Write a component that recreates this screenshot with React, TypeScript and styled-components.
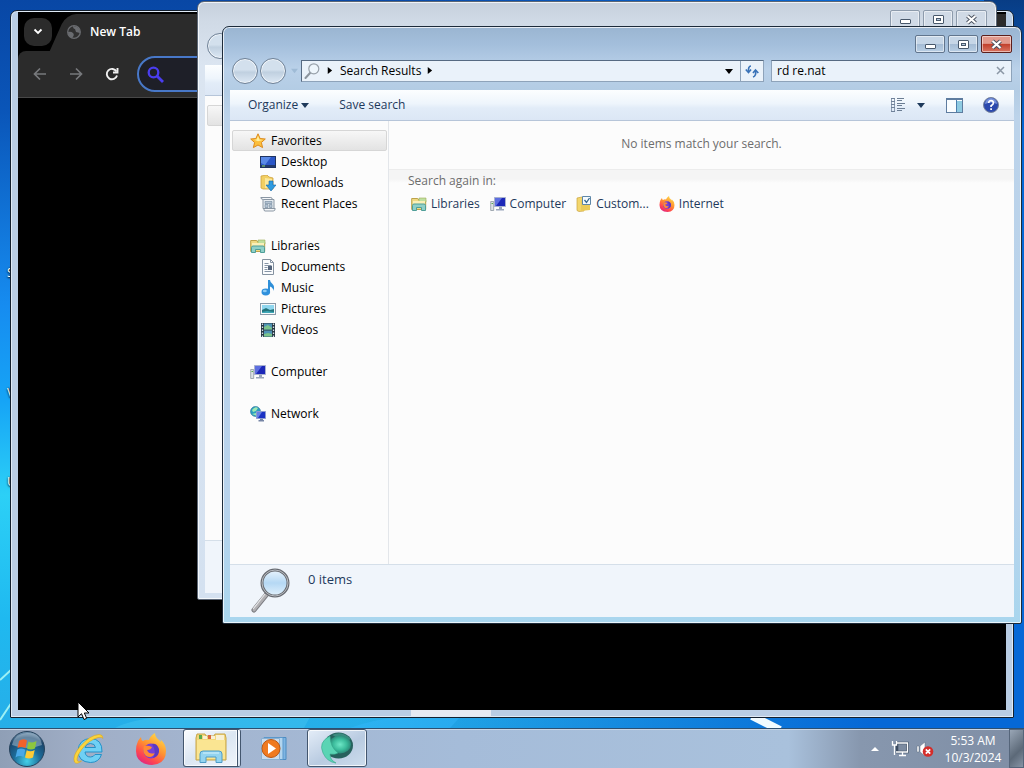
import React from "react";
import styled, { createGlobalStyle, css } from "styled-components";

const GlobalStyle = createGlobalStyle`
  *, *::before, *::after { box-sizing: border-box; }
  body { margin: 0; font: 12px/16px "Open Sans", "Noto Sans", sans-serif; color: #000; }
  button, input { font: inherit; color: inherit; border: 0; padding: 0; margin: 0; background: none; }
  a { color: inherit; text-decoration: none; }
  ul { list-style: none; margin: 0; padding: 0; }
  svg { display: block; flex: none; }
`;

/* ---------- Desktop ---------- */

const Screen = styled.div`
  display: flex;
  flex-direction: column;
  height: 100vh;
  overflow: hidden;
`;

const Desktop = styled.main`
  position: relative;
  flex: 1;
  min-height: 0;
  overflow: hidden;
  background:
    linear-gradient(180deg, rgba(8, 56, 124, 0.9) 0, transparent 18%) right / 40px 100% no-repeat,
    linear-gradient(90deg, transparent 35%, #0668d6 85%),
    linear-gradient(180deg, #0847a5 0%, #0a55b8 15%, #168cf0 42%, #16a4f6 55%, #2cd0f6 68%, #1fb9f0 85%, #26aee8 100%);
`;

const Streaks = styled.svg`
  position: absolute;
  inset: 0;
  width: 100%;
  height: 100%;
`;

const DesktopLabel = styled.span<{ $top: number }>`
  position: absolute;
  left: 7px;
  top: ${(p) => p.$top}px;
  color: #fff;
  text-shadow: 0 1px 2px #000, 1px 0 2px #000;
`;

/* ---------- Glass window ---------- */

const WindowFrame = styled.section<{ $active?: boolean; $x: number; $y: number; $r: number; $b: number }>`
  position: absolute;
  left: ${(p) => p.$x}px;
  top: ${(p) => p.$y}px;
  right: ${(p) => p.$r}px;
  bottom: ${(p) => p.$b}px;
  display: flex;
  flex-direction: column;
  padding: 0 7px 6px;
  border: 1px solid ${(p) => (p.$active ? "#1d2b3a" : "#5b6675")};
  border-radius: 7px 7px 2px 2px;
  box-shadow: inset 0 0 0 1px rgba(255, 255, 255, 0.75);
  background: ${(p) =>
    p.$active
      ? "linear-gradient(180deg, #9ab5d1 0, #a4bfdc 18px, #bad1e9 42px, #b3cce4 64px, #bcd3ea 90px, #b8d3ec 80%, #a9d6ee 100%)"
      : "linear-gradient(180deg, #c6d0dd 0, #d0dae6 20px, #dbe5f1 64px, #d4e1f0 100%)"};
`;

const TitleBar = styled.header`
  display: flex;
  justify-content: flex-end;
  gap: 3px;
  height: 32px;
  padding: 8px 2px 0 0;
`;

const CaptionButton = styled.button<{ $close?: boolean; $active?: boolean }>`
  display: grid;
  place-items: center;
  width: ${(p) => (p.$close ? 31 : 30)}px;
  height: 18px;
  border: 1px solid #61758d;
  border-radius: 2px;
  box-shadow: inset 0 0 0 1px rgba(255, 255, 255, 0.5);
  background: linear-gradient(180deg, #c6d6e7 0 48%, #a5bcd5 52%, #b9cfe5 100%);
  ${(p) => !p.$active && css`
    border-color: #8d9bac;
    background: #d0dae6;
  `}
  ${(p) => p.$close && p.$active && css`
    border-color: #5c1f1c;
    background: linear-gradient(180deg, #e29a8d 0 46%, #c2402c 52%, #d97562 100%);
  `}
`;

const NavRow = styled.div`
  display: flex;
  align-items: center;
  height: 31px;
  padding: 0 2px 8px 2px;
`;

const HistoryButtons = styled.div`
  display: flex;
  align-items: center;
  gap: 2px;
  height: 24px;
`;

const RoundButton = styled.button`
  width: 26px;
  height: 26px;
  border: 1px solid #6f8196;
  border-radius: 50%;
  box-shadow: inset 0 0 0 1px rgba(255, 255, 255, 0.7);
  background: linear-gradient(180deg, #d3e0ed 0 45%, #c0d0e0 55%, #dce8f4 100%);
`;

const RecentButton = styled.button`
  display: grid;
  place-items: center;
  width: 12px;
  height: 20px;
  margin-right: 1px;
`;

const AddressBar = styled.nav`
  display: flex;
  flex: 1;
  align-items: center;
  height: 22px;
  border: 1px solid #8ea3ba;
  border-top-color: #566a82;
  border-left-color: #566a82;
  background: #eaf2fa;
`;

const LocationIcon = styled.span`
  width: 24px;
  padding-left: 2px;
`;

const Crumb = styled.button`
  padding: 0 5px 0 7px;
`;

const AddressTail = styled.div`
  display: flex;
  align-items: center;
  height: 100%;
  margin-left: auto;
`;

const AddressButton = styled.button<{ $divided?: boolean }>`
  display: grid;
  place-items: center;
  width: 23px;
  height: 100%;
  ${(p) => p.$divided && css`border-left: 1px solid #8ea3ba;`}
`;

const SearchBox = styled.form`
  display: flex;
  align-items: center;
  flex: 0 0 241px;
  height: 22px;
  margin-left: 7px;
  padding: 0 6px 0 5px;
  border: 1px solid #8ea3ba;
  border-top-color: #566a82;
  background: #eaf2fa;
`;

const SearchInput = styled.input`
  flex: 1;
  min-width: 0;
  outline: 0;
`;

const Client = styled.div`
  display: flex;
  flex: 1;
  min-height: 0;
  flex-direction: column;
  background: #fcfcfc;
`;

const Toolbar = styled.div`
  display: flex;
  align-items: center;
  height: 31px;
  padding: 0 15px 0 18px;
  border-bottom: 1px solid #b6c5d9;
  background: linear-gradient(180deg, #fcfeff 0, #eef5fc 45%, #e2ecf8 60%, #dce7f5 100%);
  color: #1e395b;
`;

const ToolbarButton = styled.button`
  display: flex;
  align-items: center;
  gap: 3px;
  margin-right: 30px;
`;

const ToolbarIcons = styled.div`
  display: flex;
  align-items: center;
  margin-left: auto;
`;

const IconButton = styled.button<{ $gap?: number }>`
  margin-left: ${(p) => p.$gap ?? 0}px;
`;

const Body = styled.div`
  display: flex;
  flex: 1;
  min-height: 0;
`;

const SidePane = styled.nav`
  flex: 0 0 159px;
  padding: 9px 1px 0 2px;
  border-right: 1px solid #e3e6ea;
`;

const SideGroup = styled.ul`
  margin-bottom: 21px;
`;

const SideItem = styled.a<{ $child?: boolean; $selected?: boolean }>`
  display: flex;
  align-items: center;
  gap: 5px;
  height: 21px;
  padding-left: ${(p) => (p.$child ? 27 : 17)}px;
  border: 1px solid transparent;
  white-space: nowrap;
  ${(p) => p.$selected && css`
    border-color: #d6d6d6;
    border-radius: 2px;
    background: linear-gradient(180deg, #f7f7f7, #e3e3e3);
  `}
`;

const Results = styled.section`
  flex: 1;
  min-width: 0;
`;

const EmptyMessage = styled.p`
  margin: 0;
  height: 48px;
  padding-top: 15px;
  text-align: center;
  color: #6d6d6d;
`;

const SearchAgain = styled.div`
  padding: 3px 19px 0;
  border-top: 1px solid #ececec;
  background: linear-gradient(180deg, #f5f5f5 0 9px, #fcfcfc 13px);
  color: #6d6d6d;
`;

const PlaceList = styled.ul`
  display: flex;
  gap: 10px;
  padding: 7px 0 0 3px;
  color: #1e395b;
`;

const PlaceLink = styled.a`
  display: flex;
  align-items: center;
  gap: 4px;
`;

const Details = styled.footer`
  display: flex;
  height: 53px;
  padding: 3px 0 0 20px;
  gap: 16px;
  border-top: 1px solid #d5dfe9;
  background: #f0f5fb;
  font-size: 13px;
  color: #1e395b;
`;

const ItemCount = styled.span`
  padding-top: 3px;
`;

/* ---------- Browser ---------- */

const BrowserFrame = styled.section`
  position: absolute;
  left: 10px;
  top: 10px;
  right: 10px;
  bottom: 10px;
  display: flex;
  border: 1px solid #14202e;
  border-radius: 7px 7px 1px 1px;
  padding: 1px 7px 7px;
  background: linear-gradient(90deg, transparent 400px, #e6eaf2 400px 480px, transparent 480px) bottom / 100% 7px no-repeat, #b9cde4;
  box-shadow: inset 0 0 0 1px #dfeaf6;
`;

const BrowserView = styled.div`
  display: flex;
  flex: 1;
  flex-direction: column;
  overflow: hidden;
  background: #000;
  color: #fff;
`;

const TabStrip = styled.div`
  display: flex;
  align-items: center;
  height: 39px;
  padding-left: 6px;
`;

const TabSearch = styled.button`
  display: grid;
  place-items: center;
  width: 28px;
  height: 28px;
  border-radius: 10px;
  background: #2b2b2b;
`;

const Tab = styled.div`
  position: relative;
  display: flex;
  flex: 1;
  align-items: center;
  align-self: stretch;
  gap: 9px;
  margin-left: 6px;
  padding-left: 9px;
  font-size: 12px;
  font-weight: 600;
  &::before {
    content: "";
    position: absolute;
    inset: 2px 0 0 0;
    border-radius: 10px 0 0 0;
    background: #2b2b2b;
    transform: skewX(-24deg);
  }
  > * { position: relative; }
`;

const BrowserBar = styled.div`
  display: flex;
  align-items: center;
  gap: 20px;
  height: 47px;
  padding-left: 14px;
  border-bottom: 1px solid #484848;
  border-radius: 8px 0 0 0;
  background: #2b2b2b;
`;

const Omnibox = styled.label`
  display: flex;
  flex: 1;
  align-items: center;
  height: 36px;
  margin: 0 200px 0 -3px;
  padding-left: 8px;
  border: 2px solid #4878c8;
  border-radius: 18px;
  background: #1e1f28;
`;

/* ---------- Taskbar ---------- */

const Taskbar = styled.footer`
  display: flex;
  align-items: stretch;
  flex: none;
  height: 40px;
  border-top: 1px solid #2d4f70;
  box-shadow: inset 0 1px 0 #c9d6e6;
  background: linear-gradient(90deg, #8f9fb6 0, #a0aec6 8%, #a3b5d0 20%, #a5bcd9 45%, #a9c1dc 77%, #8797ae 84%, #7f8ea5 100%);
`;

const TaskButton = styled.button<{ $w: number; $open?: boolean; $stacked?: boolean }>`
  display: grid;
  place-items: center;
  width: ${(p) => p.$w}px;
  ${(p) => p.$open && css`
    margin-bottom: 1px;
    border: 1px solid #43566e;
    border-radius: 3px;
    box-shadow: inset 0 0 0 1px rgba(255, 255, 255, 0.75);
    background: linear-gradient(150deg, #e4edf8 0, #b9cbe1 55%, #cddded 100%);
  `}
  ${(p) => p.$stacked && css`
    border-right: 4px double #43566e;
    background: linear-gradient(150deg, #fafcff 0, #dbe6f2 50%, #f0f5fb 100%);
  `}
`;

const Pinned = styled.div`
  display: flex;
  margin-right: 5px;
`;

const Tray = styled.div`
  display: flex;
  align-items: center;
  margin-left: auto;
`;

const TrayButton = styled.button<{ $w: number }>`
  display: grid;
  place-items: center;
  width: ${(p) => p.$w}px;
  height: 100%;
`;

const Clock = styled.button`
  width: 72px;
  text-align: center;
  color: #fff;
  line-height: 17px;
`;

const ShowDesktop = styled.button`
  width: 15px;
  height: 100%;
  border: 1px solid #55657a;
  background: linear-gradient(135deg, #99a6b6, #5c6978 60%, #8794a5);
`;

const Pointer = styled.svg`
  position: absolute;
  left: 77px;
  top: 701px;
`;

/* ---------- Icons ---------- */

const Triangle = ({ dir = "down", w = 7, color = "#1b2a3a" }: { dir?: "down" | "right" | "up"; w?: number; color?: string }) => {
  const d = { down: "M0 2h8L4 7z", right: "M2 0v8l5-4z", up: "M0 6h8L4 2z" }[dir];
  return <svg width={w} height={w} viewBox="0 0 8 8"><path d={d} fill={color} /></svg>;
};

const StarIcon = () => (
  <svg width="16" height="16" viewBox="0 0 16 16">
    <path d="M8 .8l2.1 4.7 5.2.5-3.9 3.5 1.2 5.1L8 12l-4.6 2.6 1.2-5.1L.7 6l5.2-.5z" fill="#fcbf3c" stroke="#dd8a1c" />
    <path d="M8 2.8l1.4 3.6 3.6.5-5 1.4-3.8-1.6 2.4-.3z" fill="#fff0a0" />
  </svg>
);
const DesktopIcon = () => (
  <svg width="16" height="16" viewBox="0 0 16 16">
    <rect x=".5" y="2.5" width="15" height="11" fill="#2b57c8" stroke="#1f3461" />
    <path d="M1 3h10L5 11l-4-2z" fill="#5a8ae8" /><path d="M1 11h14v2H1z" fill="#243a6b" /><path d="M2 11.500h3v1H2z" fill="#8fe07a" />
  </svg>
);
const DownloadsIcon = () => (
  <svg width="16" height="16" viewBox="0 0 16 16">
    <path d="M1 1l6-1 2 2 4 1v11H3l-2-1z" fill="#f2cf62" stroke="#cfa23c" strokeWidth=".8" />
    <path d="M5 3l7 1v10l-7-1z" fill="#fbe89b" />
    <path d="M9 6h4v4h3l-5 6-5-6h3z" fill="#2e9be0" stroke="#1567a8" strokeWidth=".6" />
  </svg>
);
const RecentIcon = () => (
  <svg width="16" height="16" viewBox="0 0 16 16">
    <path d="M3 3.500h11v9H3z" fill="#e6ebf0" stroke="#8a96a3" />
    <path d="M.8 1.500h10q1.500 0 1.500 2H3.500q-2.700 0-2.700-2zM4 12.500h11.200q0 2.500-2 2.500H5q-1.500 0-1-2.500z" fill="#f5f7f9" stroke="#8a96a3" />
    <path d="M5 5.500h7v2H5zM5 8.500h3v3H5zM9.500 8.500H12v3H9.500z" fill="#b5c4d3" stroke="#71869c" strokeWidth=".6" />
  </svg>
);
const LibrariesIcon = () => (
  <svg width="16" height="16" viewBox="0 0 16 16">
    <path d="M.7 2.500h6l1 1.500h7v9.500h-14z" fill="#f0da84" stroke="#bda24a" />
    <path d="M8 2h7v4H8z" fill="#bfe0a0" stroke="#9dac55" strokeWidth=".6" />
    <path d="M2 5h12v3H2z" fill="#fbf0b8" />
    <path d="M1.500 14.500V9.500q0-1.500 1.500-1.500h10q1.500 0 1.500 1.500v5h-4v-3h-5v3z" fill="#8fd0c8" stroke="#4f9e98" />
  </svg>
);
const DocumentsIcon = () => (
  <svg width="16" height="16" viewBox="0 0 16 16">
    <path d="M2.500.5h8l3 3v12h-11z" fill="#fbfcfd" stroke="#8592a0" />
    <path d="M10.500.5v3h3M4.500 4.500h4M4.500 6.500h7M4.500 8.500h3M4.500 10.500h3M4.500 12.500h7" fill="none" stroke="#8795a6" />
    <rect x="8" y="7" width="4" height="4" fill="#53637a" />
  </svg>
);
const MusicIcon = () => (
  <svg width="16" height="16" viewBox="0 0 16 16">
    <path d="M8 0h2q0 2 2.500 4t1 7q0-3-3.500-4.500V12H8z" fill="#2f8fd8" />
    <ellipse cx="5.800" cy="12" rx="4.300" ry="3.400" fill="#2f90dc" /><ellipse cx="4.800" cy="11" rx="2" ry="1.300" fill="#8ccbf5" />
  </svg>
);
const PicturesIcon = () => (
  <svg width="16" height="16" viewBox="0 0 16 16">
    <rect x=".5" y="2.500" width="15" height="11" fill="#f7fafb" stroke="#8a9aa8" />
    <path d="M2 4h12v8H2z" fill="#8fd6ee" /><path d="M2 9l4-2 4 2 4-1v4H2z" fill="#24747c" /><path d="M2 11l5-1 7 1v1H2z" fill="#3fa8b8" />
  </svg>
);
const VideosIcon = () => (
  <svg width="16" height="16" viewBox="0 0 16 16">
    <path d="M1 1h14v14H1z" fill="#263642" /><path d="M4 1.500h8v6H4zM4 8.500h8v6H4z" fill="#4f93b5" /><path d="M4 5l4-2 4 3v1.500H4zM4 12l4-1 4 1v2.500H4z" fill="#7bc48c" />
    <path d="M2.500 1.500v14M13.500 1.500v14" stroke="#d7e2e8" strokeWidth="1.300" strokeDasharray="1.500 1.500" />
  </svg>
);
const ComputerIcon = () => (
  <svg width="16" height="16" viewBox="0 0 16 16">
    <path d="M.7 5.500h3v9h-3z" fill="#dde2e6" stroke="#8e98a2" strokeWidth=".8" /><path d="M1.500 7h1.500v1H1.500z" fill="#56ad50" />
    <path d="M4.500 1.500h11v9h-11z" fill="#1c28b8" stroke="#a9b2cf" /><path d="M5 2h7L6 10H5z" fill="#5d6ee0" />
    <path d="M9 11h3v2h2v1.500H6V13h3z" fill="#9aa6bb" />
  </svg>
);
const NetworkIcon = () => (
  <svg width="16" height="16" viewBox="0 0 16 16">
    <circle cx="5.500" cy="5.500" r="5" fill="#2b9fc0" stroke="#2b6e98" strokeWidth=".6" /><path d="M2 4q3-4 6-2L6 5 3 6zM2 8l4-1 1 3z" fill="#9ee8b4" />
    <path d="M6.500 5.500h9v7h-9z" fill="#1b32c4" stroke="#8d9bd0" /><path d="M7 6h5l-4 6H7z" fill="#6680e6" /><path d="M10 13h3v1h1v1.500H8.500V14H10z" fill="#7685a5" />
  </svg>
);
const CustomIcon = () => (
  <svg width="16" height="16" viewBox="0 0 16 16">
    <path d="M1 2l5-1 2 2v12l-5 .5-2-1z" fill="#f3d66d" stroke="#c9a33e" strokeWidth=".7" /><path d="M5 4l9 1v9l-9 1z" fill="#eccb58" />
    <path d="M6.500.5h8v8h-8z" fill="#f5fbff" stroke="#5f87a8" /><path d="M8.500 4l2 2.500 3-4.500" fill="none" stroke="#33658e" strokeWidth="1.300" />
  </svg>
);
const FirefoxIcon = ({ size }: { size: number }) => (
  <svg width={size} height={size} viewBox="0 0 32 32">
    <defs>
      <linearGradient id="ff" x1=".8" y1="0" x2=".2" y2="1"><stop offset="0" stopColor="#ffe14a" /><stop offset=".45" stopColor="#ff9030" /><stop offset=".75" stopColor="#ff4550" /><stop offset="1" stopColor="#d8208c" /></linearGradient>
    </defs>
    <path d="M3 8q2-3 3-4 0 3 2 4 3-2 6-1 1-4 6-7 0 4 4 7l2 2q0-2-1-3 6 5 6 12 0 13-14 14Q1 31 1 18q0-6 2-10z" fill="url(#ff)" />
    <circle cx="16" cy="18" r="7.500" fill="#7440d8" /><path d="M9 13q4-1 8 1-1 3-5 3 2 5 8 3-3 6-9 3-4-4-2-10z" fill="#ff8a35" />
    <path d="M17 11q5-1 7 5 1 7-6 9 4-6-1-14z" fill="#5b3ac2" />
  </svg>
);

const MagnifierIcon = () => (
  <svg width="16" height="16" viewBox="0 0 16 16">
    <path d="M6.500 9.500l-5 5.500" stroke="#8c959e" strokeWidth="2" strokeLinecap="round" /><circle cx="9.800" cy="5.800" r="5" fill="#eef6fc" stroke="#98a1aa" strokeWidth="1.200" />
  </svg>
);
const BigMagnifier = () => (
  <svg width="42" height="46" viewBox="0 0 42 46">
    <defs>
      <linearGradient id="lens" x1="0" y1="0" x2="0" y2="1"><stop offset="0" stopColor="#e9f4fd" /><stop offset=".5" stopColor="#b5d8f4" /><stop offset="1" stopColor="#e2f1fc" /></linearGradient>
    </defs>
    <path d="M17 26L4 42" stroke="#77787d" strokeWidth="5" strokeLinecap="round" /><path d="M17 26L4 42" stroke="#b0afb2" strokeWidth="3" strokeLinecap="round" /><path d="M15 26L3 41" stroke="#e8e8ea" strokeWidth="1.200" />
    <circle cx="25" cy="15" r="13" fill="url(#lens)" stroke="#66696f" strokeWidth="3" /><circle cx="25" cy="15" r="13" fill="none" stroke="#b9bdc3" strokeWidth="1" />
  </svg>
);
const RefreshIcon = () => (
  <svg width="14" height="14" viewBox="0 0 14 14" fill="none" stroke="#3a73b8" strokeWidth="1.700">
    <path d="M6 2Q3 2 3.500 8" /><path d="M.8 5.500L3.500 8.500 6 5.500" /><path d="M8 13Q11.500 12 10.500 6.500" /><path d="M8 9l2.500-3L13.300 9" />
  </svg>
);
const ViewIcon = () => (
  <svg width="16" height="16" viewBox="0 0 16 16" fill="none" stroke="#6b7d93">
    <path d="M1.500 1v14M4.500 1v14" stroke="#8c9db2" /><path d="M1 1.500h4M1 4.500h4M1 7.500h4M1 10.500h4M1 14.500h4" stroke="#70829a" />
    <path d="M7 1.500h7M7 3.500h5M7 6.500h8M7 8.500h5M7 11.500h8M7 13.500h5" />
  </svg>
);
const PreviewIcon = () => (
  <svg width="17" height="15" viewBox="0 0 17 15">
    <rect x=".5" y=".5" width="16" height="14" fill="#fafdff" stroke="#5e7c9f" /><path d="M1 1.500h15" stroke="#5e7c9f" /><path d="M10 3h6v11h-6z" fill="#8fcbe2" /><path d="M10.500 2v12" stroke="#4b7fae" />
  </svg>
);
const HelpIcon = () => (
  <svg width="16" height="16" viewBox="0 0 16 16">
    <circle cx="8" cy="8" r="7.500" fill="#2b49ad" stroke="#77839b" /><path d="M2 7a6 6 0 0 1 12 0q-6-3-12 0z" fill="#7892da" />
    <path d="M5.700 6q0-2.300 2.400-2.300T10.400 6Q10.400 7.300 8.100 8.800V10M8.100 11.300v1.600" fill="none" stroke="#fff" strokeWidth="1.700" />
  </svg>
);
const MinIcon = () => <svg width="13" height="11" viewBox="0 0 13 11"><rect x="1.500" y="5.500" width="10" height="4" rx=".5" fill="#fff" stroke="#48586b" /></svg>;
const MaxIcon = () => <svg width="13" height="11" viewBox="0 0 13 11"><rect x="1.500" y="1.500" width="10" height="8" rx=".5" fill="#fff" stroke="#48586b" /><rect x="4.500" y="4.500" width="4" height="2" fill="#b8cce0" stroke="#48586b" /></svg>;
const CloseIcon = () => <svg width="13" height="11" viewBox="0 0 13 11"><path d="M2.500 2l8 7M10.500 2l-8 7" stroke="#48505e" strokeWidth="4" /><path d="M2.500 2l8 7M10.500 2l-8 7" stroke="#fff" strokeWidth="2.200" /></svg>;

const StartOrb = () => (
  <svg width="38" height="38" viewBox="0 0 38 38">
    <defs>
      <radialGradient id="orb" cx=".5" cy=".85" r=".85"><stop offset="0" stopColor="#45d0e8" /><stop offset=".45" stopColor="#1c6b98" /><stop offset=".8" stopColor="#1a456b" /><stop offset="1" stopColor="#7f9eb8" /></radialGradient>
    </defs>
    <circle cx="19" cy="19" r="17.500" fill="url(#orb)" stroke="#26425c" /><path d="M4 15Q6 4 19 3t15 12Q19 21 4 15z" fill="#c0d3e0" opacity=".45" />
    <path d="M11 11q4-3 8-.5L17.500 18q-4-2-8 0z" fill="#f0622c" /><path d="M20.500 11.500q4 2 8-.5L27 18.500q-4 2-8 0z" fill="#8cc63e" />
    <path d="M9.300 19.500q4-2 8 .3L15.500 27q-4-2-8 .5z" fill="#48a8e8" /><path d="M18.700 20.300q4 2 8-.3L25 27.500q-4 2-8 0z" fill="#fccb36" />
  </svg>
);
const IeIcon = () => (
  <svg width="32" height="32" viewBox="0 0 32 32">
    <path d="M29 19H12q.5 5 5.500 5 3 0 4.500-2.500h6.500Q26 29.500 17.500 29.500 5 29 5 17.500 6 6 17.500 5.500 29.500 6 29 19zM12 14.500h10.500q-.5-4-5-4t-5.500 4z" fill="#6fd0f4" stroke="#2491c8" />
    <path d="M1.500 29Q-1 23 7 13.500 17 2 26 1.500q4 0 4 4-1-2-5-1Q16 7 9 16 2.500 25 4.500 28q1 1 4 0-5 4-7 1z" fill="#fbd43c" stroke="#d9a520" strokeWidth=".6" />
  </svg>
);
const ExplorerIcon = () => (
  <svg width="34" height="32" viewBox="0 0 34 32">
    <path d="M2 6l1-4h8l1 2h8l1-2h10l1 4v22H2z" fill="#f2d77b" stroke="#c6a448" /><path d="M5 3h3v4H5z" fill="#59a94e" /><path d="M9 4h4v3H9zM17 4h4v3h-4z" fill="#f8f0d4" /><path d="M14 3h3v4h-3z" fill="#d9683c" /><path d="M22 3h8v5h-8z" fill="#f8f0d4" />
    <path d="M3 8h28v19H3z" fill="#fae592" /><path d="M6 30.500V22q0-3 3-3h16q3 0 3 3v8.500h-6V25H12v5.500z" fill="#93d4f0" stroke="#4d9cc8" /><path d="M9 21h16" stroke="#d5f2fd" />
  </svg>
);
const MediaIcon = () => (
  <svg width="28" height="26" viewBox="0 0 28 26">
    <path d="M8 1.500h18v22H8z" fill="#7fb5e2" stroke="#4d8cc2" /><path d="M4 1.500h19v22H4z" fill="#b2d5ef" stroke="#5c98cb" /><path d="M1.500 2.500h18v21h-18z" fill="#c9dcee" stroke="#8bb1d2" />
    <circle cx="11" cy="12.500" r="9" fill="#ef7a20" stroke="#bd5710" /><path d="M8 7v11l8-5.500z" fill="#fff" />
  </svg>
);
const GreenOrb = () => (
  <svg width="34" height="34" viewBox="0 0 34 34">
    <defs>
      <radialGradient id="green" cx=".5" cy=".5" r=".5"><stop offset="0" stopColor="#6ee6c6" /><stop offset=".6" stopColor="#3cbc9c" /><stop offset="1" stopColor="#2b8a78" /></radialGradient>
    </defs>
    <ellipse cx="18.500" cy="14.500" rx="14.500" ry="13" fill="#27615d" /><path d="M12 4Q22-1 31 8q-5 3-9 3-7-6-10-7z" fill="#3b8b80" />
    <ellipse cx="20" cy="13.500" rx="11" ry="9" fill="url(#green)" />
    <path d="M10 5Q-2 11 3 22q4 9 13 10-6-3-6-9 5 1 8-1-8-6-8-17z" fill="#5ad4b4" stroke="#35a78c" strokeWidth=".6" />
  </svg>
);
const TrayNetwork = () => (
  <svg width="18" height="17" viewBox="0 0 18 17" fill="none">
    <path d="M6 3h10.500v9H6z" fill="#7c8ba0" stroke="#3d4d62" strokeWidth="2.600" /><path d="M6 3h10.500v9H5M8 15.500h7M11.500 12v3" stroke="#fff" strokeWidth="1.300" /><path d="M1.500 1v4h4V1M3.500 5v10" stroke="#fff" strokeWidth="1.300" />
  </svg>
);
const TrayVolume = () => (
  <svg width="18" height="16" viewBox="0 0 18 16">
    <path d="M1 5h2v6H1zM4 5l5-4v14l-5-4z" fill="#fff" stroke="#5f6e83" strokeWidth=".5" /><circle cx="12" cy="10.500" r="5.300" fill="#d42d2a" /><path d="M9.800 8.300l4.400 4.400M14.200 8.300l-4.400 4.400" stroke="#fff" strokeWidth="1.700" />
  </svg>
);

/* ---------- Composition ---------- */

type Place = { label: string; icon: React.ReactNode; children?: Place[] };

const places: Place[] = [
  {
    label: "Favorites", icon: <StarIcon />, children: [
      { label: "Desktop", icon: <DesktopIcon /> },
      { label: "Downloads", icon: <DownloadsIcon /> },
      { label: "Recent Places", icon: <RecentIcon /> },
    ],
  },
  {
    label: "Libraries", icon: <LibrariesIcon />, children: [
      { label: "Documents", icon: <DocumentsIcon /> },
      { label: "Music", icon: <MusicIcon /> },
      { label: "Pictures", icon: <PicturesIcon /> },
      { label: "Videos", icon: <VideosIcon /> },
    ],
  },
  { label: "Computer", icon: <ComputerIcon /> },
  { label: "Network", icon: <NetworkIcon /> },
];

const searchPlaces: Place[] = [
  { label: "Libraries", icon: <LibrariesIcon /> },
  { label: "Computer", icon: <ComputerIcon /> },
  { label: "Custom...", icon: <CustomIcon /> },
  { label: "Internet", icon: <FirefoxIcon size={16} /> },
];

const Caption = ({ active }: { active?: boolean }) => (
  <TitleBar>
    <CaptionButton $active={active} aria-label="Minimize"><MinIcon /></CaptionButton>
    <CaptionButton $active={active} aria-label="Maximize"><MaxIcon /></CaptionButton>
    <CaptionButton $active={active} $close aria-label="Close"><CloseIcon /></CaptionButton>
  </TitleBar>
);

const History = () => (
  <HistoryButtons>
    <RoundButton aria-label="Back" />
    <RoundButton aria-label="Forward" />
    <RecentButton aria-label="Recent pages"><Triangle color="#9fbbd6" /></RecentButton>
  </HistoryButtons>
);

const BackgroundWindow = () => (
  <WindowFrame $x={197} $y={1} $r={27} $b={128}>
    <Caption />
    <NavRow><History /><AddressBar /></NavRow>
    <Client>
      <Toolbar />
      <Body><SidePane><SideItem as="div" $selected /></SidePane></Body>
      <Details />
    </Client>
  </WindowFrame>
);

const SearchWindow = () => (
  <WindowFrame $active $x={222} $y={26} $r={2} $b={104}>
    <Caption active />
    <NavRow>
      <History />
      <AddressBar aria-label="Address">
        <LocationIcon><MagnifierIcon /></LocationIcon>
        <Triangle dir="right" color="#000" />
        <Crumb>Search Results</Crumb>
        <Triangle dir="right" color="#000" />
        <AddressTail>
          <AddressButton aria-label="Previous locations"><Triangle color="#000" w={8} /></AddressButton>
          <AddressButton $divided aria-label="Refresh"><RefreshIcon /></AddressButton>
        </AddressTail>
      </AddressBar>
      <SearchBox onSubmit={(e) => e.preventDefault()}>
        <SearchInput aria-label="Search" defaultValue="rd re.nat" />
        <button type="button" aria-label="Clear search">
          <svg width="9" height="9" viewBox="0 0 9 9"><path d="M1 1l7 7M8 1L1 8" stroke="#8b97a5" strokeWidth="1.500" /></svg>
        </button>
      </SearchBox>
    </NavRow>
    <Client>
      <Toolbar>
        <ToolbarButton>Organize <Triangle w={8} color="#1e395b" /></ToolbarButton>
        <ToolbarButton>Save search</ToolbarButton>
        <ToolbarIcons>
          <IconButton aria-label="Change view"><ViewIcon /></IconButton>
          <IconButton $gap={11} aria-label="More view options"><Triangle w={8} color="#1e395b" /></IconButton>
          <IconButton $gap={21} aria-label="Show preview pane"><PreviewIcon /></IconButton>
          <IconButton $gap={20} aria-label="Help"><HelpIcon /></IconButton>
        </ToolbarIcons>
      </Toolbar>
      <Body>
        <SidePane aria-label="Places">
          {places.map((group, i) => (
            <SideGroup key={group.label}>
              <li><SideItem href="#" $selected={i === 0}>{group.icon}{group.label}</SideItem></li>
              {group.children?.map((c) => (
                <li key={c.label}><SideItem href="#" $child>{c.icon}{c.label}</SideItem></li>
              ))}
            </SideGroup>
          ))}
        </SidePane>
        <Results>
          <EmptyMessage>No items match your search.</EmptyMessage>
          <SearchAgain>
            Search again in:
            <PlaceList>
              {searchPlaces.map((p) => <li key={p.label}><PlaceLink href="#">{p.icon}{p.label}</PlaceLink></li>)}
            </PlaceList>
          </SearchAgain>
        </Results>
      </Body>
      <Details><BigMagnifier /><ItemCount>0 items</ItemCount></Details>
    </Client>
  </WindowFrame>
);

const Browser = () => (
  <BrowserFrame>
    <BrowserView>
      <TabStrip>
        <TabSearch aria-label="Search tabs"><svg width="10" height="7" viewBox="0 0 10 7"><path d="M1.500 1.500L5 5l3.500-3.500" fill="none" stroke="#fff" strokeWidth="1.800" /></svg></TabSearch>
        <Tab>
          <svg width="14" height="14" viewBox="0 0 14 14"><circle cx="7" cy="7" r="6.300" fill="#303030" stroke="#6a6c70" strokeWidth="1.300" /><path d="M1 7q3-1 5 1t-1 5Q1 11 1 7zM6 1q0 3 2 3l1 3 4 1Q14 2 6 1z" fill="#6a6c70" /></svg>
          <span>New Tab</span>
        </Tab>
      </TabStrip>
      <BrowserBar>
        <button aria-label="Back"><svg width="16" height="14" viewBox="0 0 16 14" fill="none" stroke="#77797c" strokeWidth="1.700"><path d="M14 7H3M8 1.500L2.500 7 8 12.500" /></svg></button>
        <button aria-label="Forward"><svg width="16" height="14" viewBox="0 0 16 14" fill="none" stroke="#77797c" strokeWidth="1.700"><path d="M2 7h11M8 1.500L13.500 7 8 12.500" /></svg></button>
        <button aria-label="Reload"><svg width="16" height="14" viewBox="0 0 16 14" fill="none" stroke="#f1f1f1" strokeWidth="1.900"><path d="M12.500 4.500A5.200 5.200 0 1 0 13 8.500" /><path d="M13.500 1v4.500H9" /></svg></button>
        <Omnibox><svg width="17" height="17" viewBox="0 0 17 17" fill="none" stroke="#4a3df0"><circle cx="6.500" cy="6.500" r="4.800" strokeWidth="2.300" /><path d="M10 10l6 6" strokeWidth="2.800" /></svg><SearchInput aria-label="Address" /></Omnibox>
      </BrowserBar>
    </BrowserView>
  </BrowserFrame>
);

export default function App() {
  return (
    <Screen>
      <GlobalStyle />
      <Desktop>
        <Streaks viewBox="0 0 1024 728" preserveAspectRatio="none" fill="none">
          <path d="M0 680l12-11M0 720l12-18" stroke="#9df0f4" strokeWidth="2" />
          <path d="M115 728q15-8 45-11h150l-6 11z" fill="#55cff4" opacity=".3" />
          <path d="M350 728q20-8 50-11h60l-10 11z" fill="#36b9ff" opacity=".4" />
          <path d="M752 716l28 14" stroke="#f1fbff" strokeWidth="8" />
        </Streaks>
        <DesktopLabel $top={265}>S</DesktopLabel>
        <DesktopLabel $top={385}>V</DesktopLabel>
        <DesktopLabel $top={474}>U</DesktopLabel>
        <Browser />
        <BackgroundWindow />
        <SearchWindow />
        <Pointer width="13" height="20" viewBox="0 0 13 20"><path d="M1 1v15l3.500-3.300L7 18.500l2.700-1.200L7.300 12H12z" fill="#fff" stroke="#000" /></Pointer>
      </Desktop>
      <Taskbar>
        <Pinned>
          <TaskButton $w={54} aria-label="Start"><StartOrb /></TaskButton>
          <TaskButton $w={70} aria-label="Internet Explorer"><IeIcon /></TaskButton>
          <TaskButton $w={54} aria-label="Firefox"><FirefoxIcon size={32} /></TaskButton>
        </Pinned>
        <TaskButton $w={58} $open $stacked aria-label="Windows Explorer"><ExplorerIcon /></TaskButton>
        <TaskButton $w={66} aria-label="Media Player"><MediaIcon /></TaskButton>
        <TaskButton $w={60} $open aria-label="Browser"><GreenOrb /></TaskButton>
        <Tray>
          <TrayButton $w={22} aria-label="Show hidden icons"><Triangle dir="up" color="#fff" w={8} /></TrayButton>
          <TrayButton $w={27} aria-label="Network"><TrayNetwork /></TrayButton>
          <TrayButton $w={24} aria-label="Volume"><TrayVolume /></TrayButton>
          <Clock>5:53 AM<br />10/3/2024</Clock>
          <ShowDesktop aria-label="Show desktop" />
        </Tray>
      </Taskbar>
    </Screen>
  );
}
